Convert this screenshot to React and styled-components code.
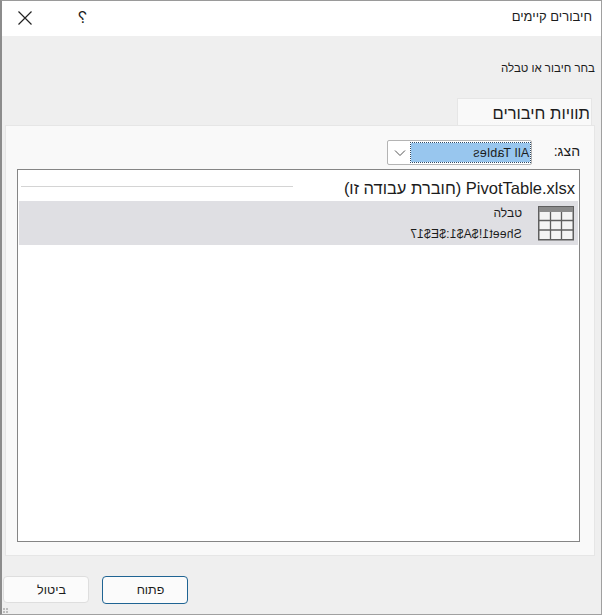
import styled, { createGlobalStyle } from "styled-components"

const Global = createGlobalStyle`
  html, body {
    margin: 0;
    padding: 0;
    background: #fff;
  }
  body {
    font-family: "Liberation Sans", "Noto Sans", sans-serif;
  }
`

const Dialog = styled.div`
  position: relative;
  width: 602px;
  height: 615px;
  box-sizing: border-box;
  direction: rtl;
  display: flex;
  flex-direction: column;
  background: #efefef;
  border-top: 1px solid #9a9a9a;
  border-left: 2px solid #8c8c8c;
  border-right: 1px solid #a0a0a0;
  border-bottom: 1px solid #a0a0a0;
  color: #1c1c1c;
`

const TitleBar = styled.div`
  height: 35px;
  flex: none;
  background: #fff;
  display: flex;
  align-items: center;
  padding: 0 9px 2px 15px;
  box-sizing: border-box;
`

const Title = styled.div`
  flex: 1;
  font-size: 13px;
  margin-top: -3px;
`

const HelpMark = styled.div`
  width: 8px;
  margin-left: 45px;
  font-size: 16px;
  transform: scaleX(-1);
`

const CloseButton = styled.svg`
  width: 16px;
  height: 16px;
  flex: none;
`

const Prompt = styled.div`
  margin: 24px 6px 0 0;
  height: 16px;
  font-size: 11.5px;
  line-height: 16px;
`

const Tabs = styled.div`
  display: flex;
  margin: 22px 9px 0 0;
`

const Tab = styled.div`
  width: 135px;
  height: 27px;
  box-sizing: border-box;
  background: #f9f9f9;
  border: 1px solid #e6e6e6;
  border-bottom: 0;
  font-size: 16.5px;
  line-height: 28px;
  padding-right: 1px;
`

const Panel = styled.div`
  flex: 1;
  margin: 0 6px 0 3px;
  min-height: 0;
  background: #f9f9f9;
  border: 1px solid #e6e6e6;
  padding: 14px 14px 13px 11px;
  display: flex;
  flex-direction: column;
`

const ShowRow = styled.div`
  display: flex;
  align-items: center;
  height: 25px;
  margin-bottom: 4px;
`

const ShowLabel = styled.div`
  width: 48px;
  font-size: 14px;
  margin-top: -4px;
`

const Select = styled.div`
  width: 145px;
  height: 25px;
  box-sizing: border-box;
  background: #fff;
  border: 1px solid #b4b4b4;
  border-radius: 2px;
  display: flex;
  align-items: center;
  padding: 2px 1px;
`

const SelectValue = styled.div`
  width: 119px;
  height: 19px;
  background: #98c6ee;
  outline: 1px dotted #2c4a66;
  font-size: 12.5px;
  line-height: 21px;
  padding-right: 1px;
  box-sizing: border-box;
  text-align: right;
`

const Mirrored = styled.span`
  display: inline-block;
  direction: ltr;
  transform: scaleX(-1);
  letter-spacing: ${(p) => p.$spacing || "0"};
`

const SelectArrow = styled.div`
  flex: 1;
  display: flex;
  align-items: center;
  justify-content: center;
`

const ListBox = styled.div`
  flex: 1;
  background: #fff;
  border: 1px solid #858585;
  padding: 1px;
`

const GroupHeader = styled.div`
  height: 30px;
  display: flex;
  align-items: center;
  gap: 51px;
  font-size: 16.5px;
  padding: 0 3px 0 2px;
`

const GroupName = styled.span`
  margin-top: 5px;
`

const GroupRule = styled.div`
  flex: 1;
  height: 1px;
  background: #d4d4d4;
`

const Row = styled.div`
  height: 44px;
  background: #dfdfe3;
  display: flex;
  align-items: center;
  padding-right: 4px;
`

const TableIcon = styled.svg`
  width: 36px;
  height: 36px;
  flex: none;
  margin-left: 16px;
`

const RowText = styled.div`
  font-size: 12px;
  line-height: 21px;
  padding-top: 2px;
`

const RowLine = styled.div`
  white-space: nowrap;
`

const Footer = styled.div`
  height: 58px;
  flex: none;
  display: flex;
  gap: 13px;
  padding: 20px 0 0 1px;
  box-sizing: border-box;
  direction: ltr;
`

const Button = styled.button`
  width: 86px;
  height: ${(p) => (p.$primary ? "28px" : "27px")};
  box-sizing: border-box;
  padding: 0 0 0 11px;
  background: #fbfbfb;
  border: 1px solid ${(p) => (p.$primary ? "#1f6493" : "#dedede")};
  border-radius: 4px;
  font-family: inherit;
  font-size: 12.5px;
  color: #1c1c1c;
`

const Grip = styled.svg`
  position: absolute;
  left: 1px;
  bottom: 1px;
  width: 6px;
  height: 6px;
`

const App = () => {
  return (
    <>
      <Global />
      <Dialog>
        <TitleBar>
          <Title>חיבורים קיימים</Title>
          <HelpMark>?</HelpMark>
          <CloseButton viewBox="0 0 16 16">
            <path d="M1.5 1.5 14.5 14.5M14.5 1.5 1.5 14.5" stroke="#222" strokeWidth="1.2" fill="none" />
          </CloseButton>
        </TitleBar>
        <Prompt>בחר חיבור או טבלה</Prompt>
        <Tabs>
          <Tab>תוויות חיבורים</Tab>
        </Tabs>
        <Panel>
          <ShowRow>
            <ShowLabel>הצג:</ShowLabel>
            <Select>
              <SelectValue>
                <Mirrored $spacing="0.3px">All Tables</Mirrored>
              </SelectValue>
              <SelectArrow>
                <svg width="12" height="8" viewBox="0 0 12 8">
                  <path d="M1 1.5 6 6.5 11 1.5" stroke="#555" strokeWidth="1" fill="none" />
                </svg>
              </SelectArrow>
            </Select>
          </ShowRow>
          <ListBox>
            <GroupHeader>
              <GroupName>PivotTable.xlsx (חוברת עבודה זו)</GroupName>
              <GroupRule />
            </GroupHeader>
            <Row>
              <TableIcon viewBox="0 0 36 36">
                <rect x="0.75" y="1.75" width="34.5" height="33" fill="#f4f4f4" stroke="#5f5f5f" strokeWidth="1.5" />
                <rect x="1" y="2" width="34" height="5" fill="#8a8a8a" />
                <path d="M12.5 7V34M23.5 7V34M1 15.5H35M1 25H35" stroke="#5f5f5f" strokeWidth="1.3" fill="none" />
              </TableIcon>
              <RowText>
                <RowLine>טבלה</RowLine>
                <RowLine>
                  <Mirrored $spacing="0.25px">Sheet1!$A$1:$E$17</Mirrored>
                </RowLine>
              </RowText>
            </Row>
          </ListBox>
        </Panel>
        <Footer>
          <Button>ביטול</Button>
          <Button $primary>פתוח</Button>
        </Footer>
        <Grip viewBox="0 0 6 6">
          <path d="M0 1H2V3H0ZM3 1H5V3H3ZM0 4H2V6H0ZM3 4H5V6H3Z" fill="#bcbcbc" />
        </Grip>
      </Dialog>
    </>
  )
}

export default App
